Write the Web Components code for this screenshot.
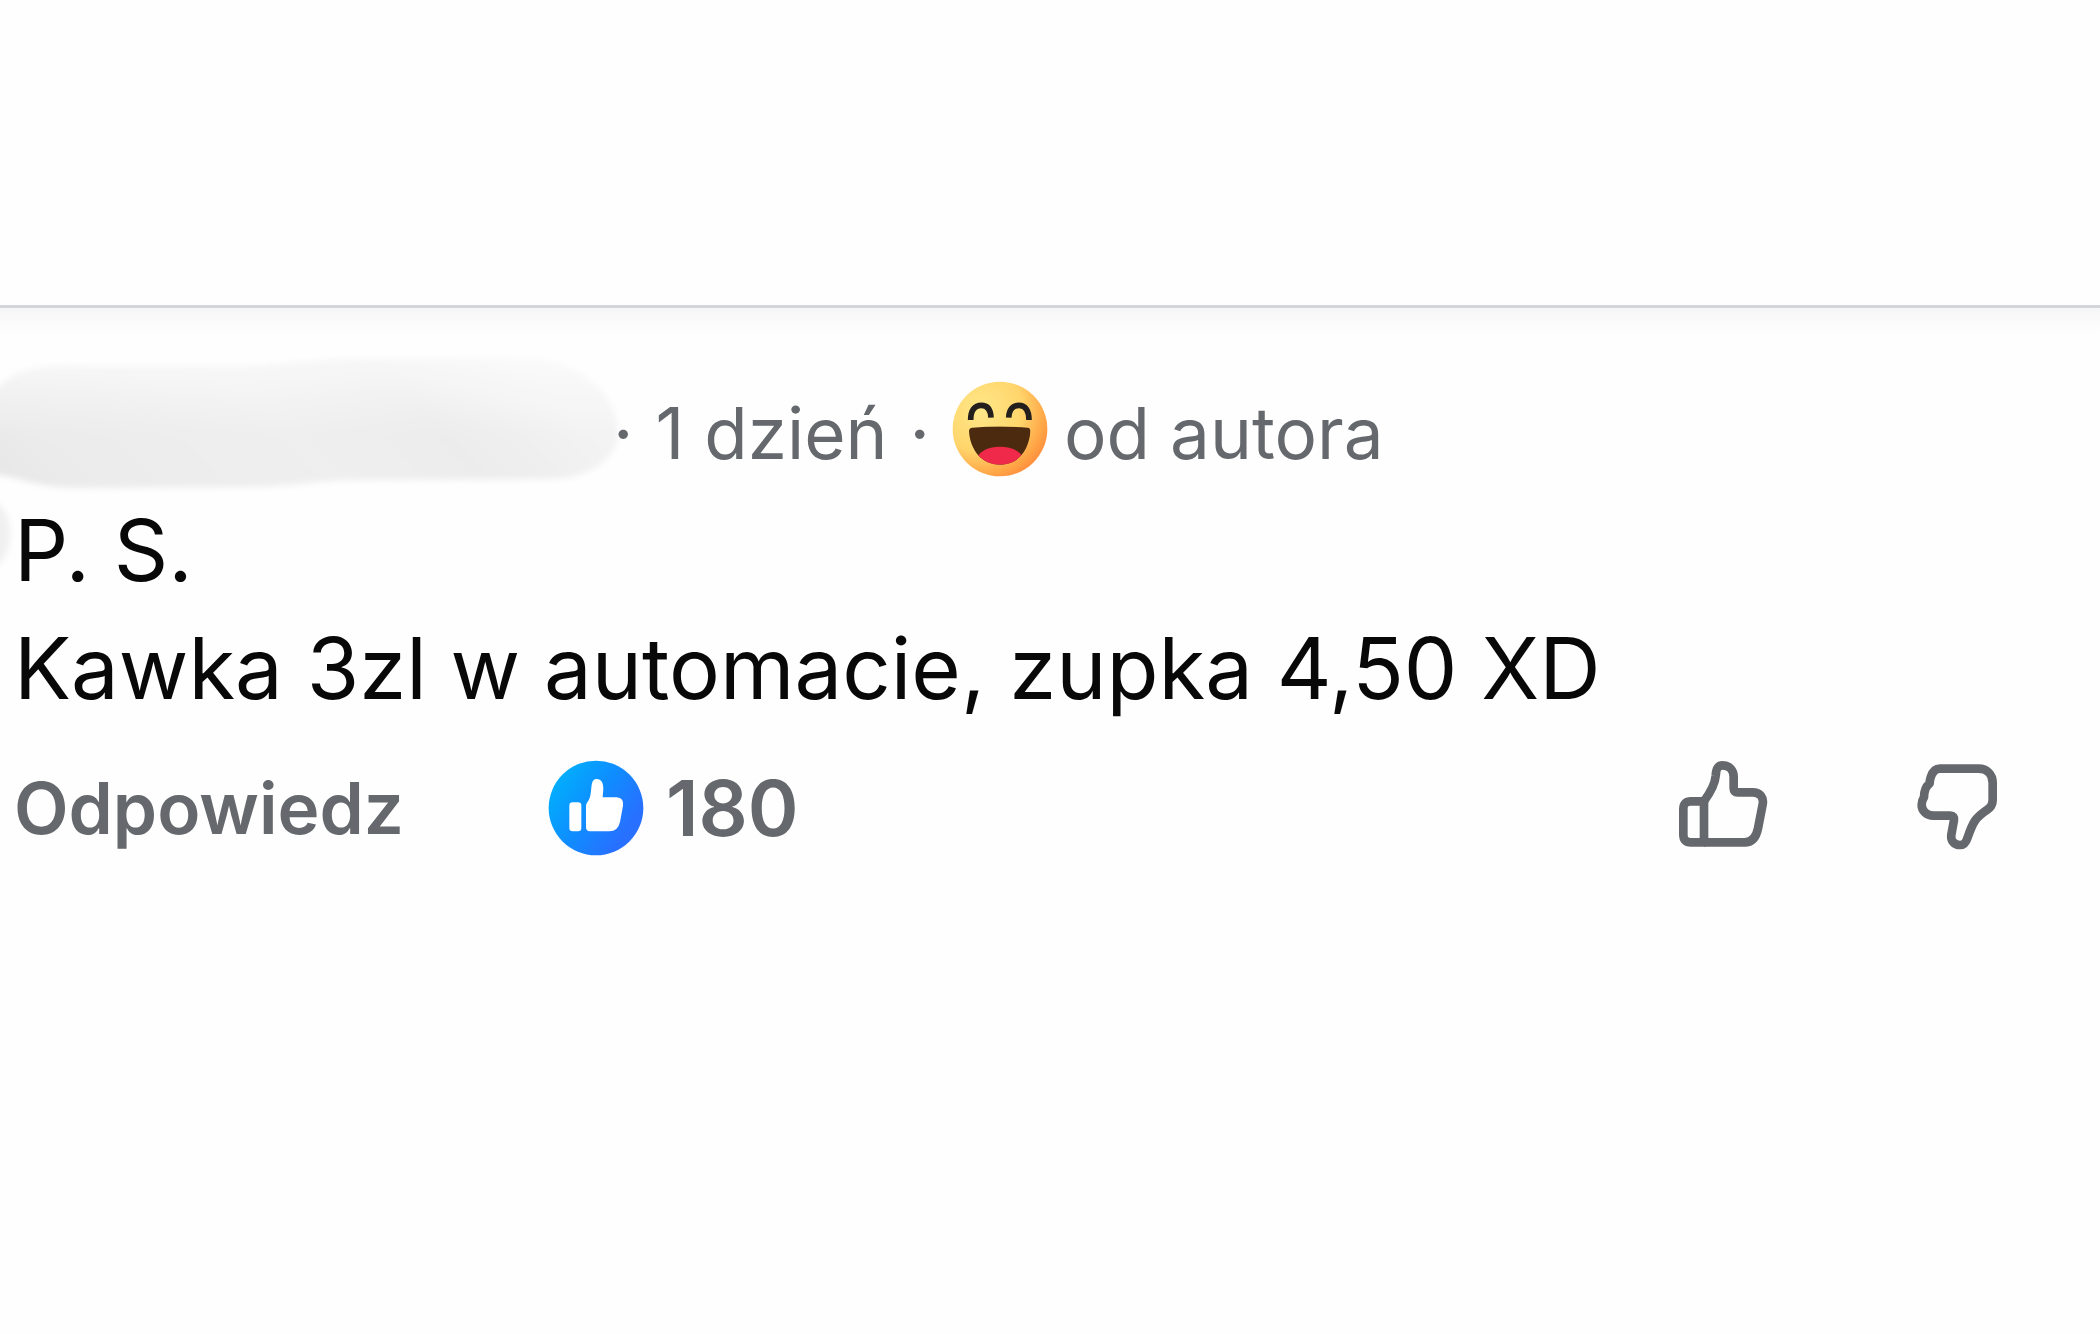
<!DOCTYPE html>
<html lang="pl">
<head>
<meta charset="utf-8">
<title>Komentarz</title>
<style>
  body {
    margin: 0;
    background: #fefefe;
    color: #080809;
    font-family: Inter, "Liberation Sans", sans-serif;
  }
</style>
</head>
<body>
<comment-thread>
  <user-comment age="1 dzień" likes="180">
    <div>P. S.</div>
    <div>Kawka 3zl w automacie, zupka 4,50 XD</div>
  </user-comment>
</comment-thread>

<script>
class CommentThread extends HTMLElement {
  constructor () {
    super()
    this.attachShadow({ mode: 'open' })
  }

  connectedCallback () {
    this.shadowRoot.innerHTML = `
      <style>
        :host {
          display: block;
          padding-top: 305px;
        }
        section {
          border-top: 3px solid #d3d5da;
          padding-top: 59px;
          background: linear-gradient(#f6f6f8, #fefefe 26px);
        }
      </style>
      <section><slot></slot></section>
    `
  }
}

// hidden author name, drawn as a soft grey brush stroke
class HiddenName extends HTMLElement {
  constructor () {
    super()
    this.attachShadow({ mode: 'open' })
  }

  connectedCallback () {
    this.shadowRoot.innerHTML = `
      <style>
        :host {
          display: block;
        }
        svg {
          display: block;
          overflow: visible;
        }
      </style>
      <svg width="591" height="123" viewBox="0 367 591 123" aria-hidden="true">
        <defs>
          <linearGradient id="tone" x1="0" y1="1" x2="1" y2="0.8">
            <stop offset="0" stop-color="#e5e5e5"/>
            <stop offset="0.15" stop-color="#ebebeb"/>
            <stop offset="0.55" stop-color="#efefef"/>
            <stop offset="0.78" stop-color="#ececec"/>
            <stop offset="1" stop-color="#f3f3f3"/>
          </linearGradient>
          <linearGradient id="light" x1="0" y1="0" x2="0" y2="1">
            <stop offset="0" stop-color="#fff" stop-opacity="0.6"/>
            <stop offset="0.6" stop-color="#fff" stop-opacity="0"/>
          </linearGradient>
          <filter id="soft" x="-10%" y="-20%" width="120%" height="140%">
            <feGaussianBlur stdDeviation="3"/>
          </filter>
        </defs>
        <g filter="url(#soft)">
          <path fill="url(#tone)" d="M-20 400 L0 386 Q20 366 60 366 L230 366 C290 366 300 359 360 359 L520 358 C580 358 618 395 618 433 C618 458 590 479 550 479 L370 480 C310 480 300 487 240 487 L80 488 C40 488 20 478 0 475 L-20 472Z"/>
          <path fill="url(#light)" d="M-20 400 L0 386 Q20 366 60 366 L230 366 C290 366 300 359 360 359 L520 358 C580 358 618 395 618 433 C618 458 590 479 550 479 L370 480 C310 480 300 487 240 487 L80 488 C40 488 20 478 0 475 L-20 472Z"/>
          <ellipse cx="-8" cy="534" rx="18" ry="32" fill="#f0f0f0"/>
        </g>
      </svg>
    `
  }
}

class HahaIcon extends HTMLElement {
  constructor () {
    super()
    this.attachShadow({ mode: 'open' })
  }

  connectedCallback () {
    this.shadowRoot.innerHTML = `
      <style>
        :host, svg {
          display: block;
        }
      </style>
      <svg width="96" height="96" viewBox="59 46 288 288" role="img" aria-label="Ha ha">
        <defs>
          <radialGradient id="face" cx="0.3" cy="0.3" r="0.8">
            <stop offset="0" stop-color="#ffe889"/>
            <stop offset="0.55" stop-color="#ffd56b"/>
            <stop offset="0.85" stop-color="#ffa546"/>
            <stop offset="1" stop-color="#ff8b3c"/>
          </radialGradient>
          <clipPath id="mouth">
            <path d="M110 197 Q110 187 120 186 Q203 179 286 186 Q295 187 294 198 C290 252 258 297 203 297 C146 297 114 252 110 197Z"/>
          </clipPath>
        </defs>
        <circle cx="203" cy="190" r="142" fill="url(#face)"/>
        <g fill="none" stroke="#231f1c" stroke-width="17">
          <path d="M115 163 C115 134 127 119 147 119 C166 119 175 132 176 156"/>
          <path d="M229 156 C230 132 241 119 260 119 C279 119 290 134 290 163"/>
        </g>
        <g clip-path="url(#mouth)">
          <rect x="100" y="170" width="200" height="140" fill="#4b2a10"/>
          <ellipse cx="203" cy="287" rx="72" ry="44" fill="#f0284a"/>
        </g>
      </svg>
    `
  }
}

class LikeBadge extends HTMLElement {
  constructor () {
    super()
    this.attachShadow({ mode: 'open' })
  }

  connectedCallback () {
    this.shadowRoot.innerHTML = `
      <style>
        :host, svg {
          display: block;
        }
      </style>
      <svg width="96" height="96" viewBox="56 46 288 288" role="img" aria-label="Lubię to!">
        <defs>
          <linearGradient id="blue" x1="0.1" y1="0.2" x2="0.85" y2="0.7">
            <stop offset="0" stop-color="#02adfc"/>
            <stop offset="0.5" stop-color="#0f8dff"/>
            <stop offset="1" stop-color="#2870ff"/>
          </linearGradient>
        </defs>
        <circle cx="200" cy="190" r="142" fill="url(#blue)"/>
        <rect x="120" y="173" width="36" height="87" rx="10" fill="#fff"/>
        <path fill="#fff" d="M170 184 Q170 177 175 171 C184 160 184 146 187 120 Q189 103 202 103 C217 103 222 116 222 132 L220 158 H262 Q284 159 281 183 L272 232 Q266 260 240 260 H182 Q170 260 170 247Z"/>
      </svg>
    `
  }
}

class VoteButton extends HTMLElement {
  constructor () {
    super()
    this.attachShadow({ mode: 'open' })
  }

  connectedCallback () {
    const down = this.hasAttribute('down')
    const label = down ? 'Nie lubię' : 'Lubię to'
    const icon = down
      ? `<svg width="82" height="96" viewBox="798 60 246 288">
          <path d="M870 86 H985 C1012 86 1028 104 1028 128 V180 C1028 193 1024 201 1012 209 C977 233 970 243 953 292 C948 308 943 315 930 315 C913 315 901 302 904 284 L912 240 Q914 227 901 227 H850 C829 227 815 212 815 194 Q815 182 822 172 Q822 158 826 148 Q829 138 839 130 Q839 121 842 112 C847 96 856 86 870 86Z"/>
        </svg>`
      : `<svg width="90" height="96" viewBox="82 60 270 288">
          <path d="M160 184 H121 Q98 184 98 207 V284 Q98 307 121 307 H160Z"/>
          <path d="M160 184 C180 156 193 134 195 108 C196 87 200 76 215 76 C237 76 249 91 249 111 V145 Q249 157 261 157 H306 C328 157 340 172 336 193 L322 265 C317 290 305 307 282 307 H160"/>
        </svg>`
    this.shadowRoot.innerHTML = `
      <style>
        :host {
          display: block;
        }
        button {
          display: block;
          padding: 0;
          border: none;
          background: none;
          cursor: pointer;
        }
        svg {
          display: block;
          fill: none;
          stroke: #65686c;
          stroke-width: 26;
          stroke-linejoin: round;
        }
      </style>
      <button type="button" aria-label="${label}">${icon}</button>
    `
  }
}

class UserComment extends HTMLElement {
  constructor () {
    super()
    this.attachShadow({ mode: 'open' })
  }

  connectedCallback () {
    this.shadowRoot.innerHTML = `
      <style>
        :host {
          display: block;
        }
        .meta, .reaction, .actions, .likes, .votes {
          display: flex;
          align-items: center;
        }
        .meta, .actions {
          color: #65686c;
          font-size: 71px;
          line-height: 96px;
          white-space: nowrap;
        }
        .meta {
          gap: 22px;
        }
        .meta span {
          padding-top: 8px;
        }
        .reaction {
          gap: 16px;
        }
        .body {
          padding: 2px 14px 0;
          font-size: 85px;
          line-height: 118px;
        }
        .actions {
          margin-top: 32px;
          padding: 0 102px 0 14px;
          font-weight: 600;
        }
        .actions > button {
          padding: 0;
          border: none;
          background: none;
          color: inherit;
          font: inherit;
          cursor: pointer;
        }
        .likes {
          gap: 22px;
          margin-left: 144px;
          font-size: 77px;
        }
        .votes {
          gap: 148px;
          margin-left: auto;
        }
      </style>
      <div class="meta">
        <hidden-name></hidden-name>
        <span>·</span>
        <span>${this.getAttribute('age')}</span>
        <span>·</span>
        <div class="reaction">
          <haha-icon></haha-icon>
          <span>od autora</span>
        </div>
      </div>
      <div class="body"><slot></slot></div>
      <div class="actions">
        <button type="button">Odpowiedz</button>
        <div class="likes">
          <like-badge></like-badge>
          <span>${this.getAttribute('likes')}</span>
        </div>
        <div class="votes">
          <vote-button></vote-button>
          <vote-button down></vote-button>
        </div>
      </div>
    `
  }
}

customElements.define('hidden-name', HiddenName)
customElements.define('haha-icon', HahaIcon)
customElements.define('like-badge', LikeBadge)
customElements.define('vote-button', VoteButton)
customElements.define('user-comment', UserComment)
customElements.define('comment-thread', CommentThread)
</script>
</body>
</html>
